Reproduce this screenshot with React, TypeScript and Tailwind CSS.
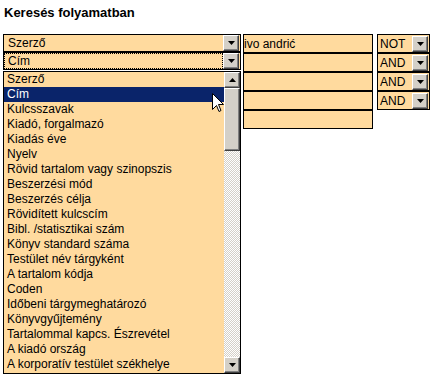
import type { ReactNode } from 'react'

const FIELDS = [
  'Szerző',
  'Cím',
  'Kulcsszavak',
  'Kiadó, forgalmazó',
  'Kiadás éve',
  'Nyelv',
  'Rövid tartalom vagy szinopszis',
  'Beszerzési mód',
  'Beszerzés célja',
  'Rövidített kulcscím',
  'Bibl. /statisztikai szám',
  'Könyv standard száma',
  'Testület név tárgyként',
  'A tartalom kódja',
  'Coden',
  'Időbeni tárgymeghatározó',
  'Könyvgyűjtemény',
  'Tartalommal kapcs. Észrevétel',
  'A kiadó ország',
  'A korporatív testület székhelye',
]

const INPUTS = ['ivo andrić', '', '', '', '']
const OPERATORS = ['NOT', 'AND', 'AND', 'AND']

function Triangle({ up = false }: { up?: boolean }) {
  return (
    <svg width="7" height="4" viewBox="0 0 7 4" className="block">
      <path d={up ? 'M3.5 0 L7 4 L0 4 Z' : 'M0 0 L7 0 L3.5 4 Z'} fill="#000" />
    </svg>
  )
}

// Windows classic 3D button
function ArrowButton({ up = false }: { up?: boolean }) {
  return (
    <div className="w-[16px] h-[16px] shrink-0 bg-[#d4d0c8] border-t border-l border-t-white border-l-white border-b border-r border-b-[#404040] border-r-[#404040] shadow-[inset_-1px_-1px_#808080] flex items-center justify-center">
      <Triangle up={up} />
    </div>
  )
}

interface ComboProps {
  children: ReactNode
  focused?: boolean
  className?: string
  /** padding class for the text part */
  pad?: string
}

function Combo({ children, focused = false, className = '', pad = 'pl-[4px]' }: ComboProps) {
  return (
    <div className={`border border-black bg-[#ffda9e] flex items-center pr-px ${className}`}>
      <div className={`flex-1 h-full flex items-center ${focused ? 'border border-dotted border-black pl-[3px]' : pad}`}>
        {children}
      </div>
      <ArrowButton />
    </div>
  )
}

function Cursor() {
  return (
    <svg width="12" height="19" viewBox="0 0 12 19" className="absolute left-[208px] top-[21px]">
      <path d="M0.5 0.5 L0.5 16.5 L4.5 12.5 L7 18.5 L9 17.5 L6.5 11.5 L11.5 11.5 Z" fill="#fff" stroke="#000" strokeWidth="1" />
    </svg>
  )
}

export default function App() {
  return (
    <div className="w-[438px] h-[380px] bg-white text-black font-['Liberation_Sans',Arial,sans-serif] text-[12px] leading-none">
      <h1 className="pl-[4px] pt-[5px] text-[13px] font-bold leading-[15px]">Keresés folyamatban</h1>

      <div className="flex items-start pl-[3px] mt-[14px]">
        {/* field selectors + open list */}
        <div className="w-[238px] flex flex-col">
          <Combo className="h-[18px]">Szerző</Combo>
          <Combo className="h-[18px]" focused>Cím</Combo>
          <div className="relative h-[303px] mt-px border border-black bg-[#ffda9e] flex">
            <ul className="flex-1">
              {FIELDS.map((f, i) => (
                <li
                  key={f}
                  className={`h-[15px] leading-[15px] pl-[3px] whitespace-nowrap ${i === 1 ? 'bg-[#0a246a] text-white' : ''}`}
                >
                  {f}
                </li>
              ))}
            </ul>
            <div className="w-[16px] flex flex-col bg-[image:repeating-conic-gradient(#d4d0c8_0%_25%,#ffffff_0%_50%)] bg-[length:2px_2px]">
              <ArrowButton up />
              <div className="h-[63px] bg-[#d4d0c8] border-t border-l border-t-white border-l-white border-b border-r border-b-[#404040] border-r-[#404040] shadow-[inset_-1px_-1px_#808080]" />
              <div className="flex-1" />
              <ArrowButton />
            </div>
            <Cursor />
          </div>
        </div>

        {/* search terms */}
        <div className="w-[130px] ml-[2px] flex flex-col">
          {INPUTS.map((v, i) => (
            <div key={i} className="h-[19px] border border-black bg-[#ffda9e] flex items-center">
              {v}
            </div>
          ))}
        </div>

        {/* boolean operators */}
        <div className="w-[53px] ml-[4px] flex flex-col">
          {OPERATORS.map((op, i) => (
            <Combo key={i} className="h-[19px]" pad="pl-[2px]">{op}</Combo>
          ))}
        </div>
      </div>
    </div>
  )
}
